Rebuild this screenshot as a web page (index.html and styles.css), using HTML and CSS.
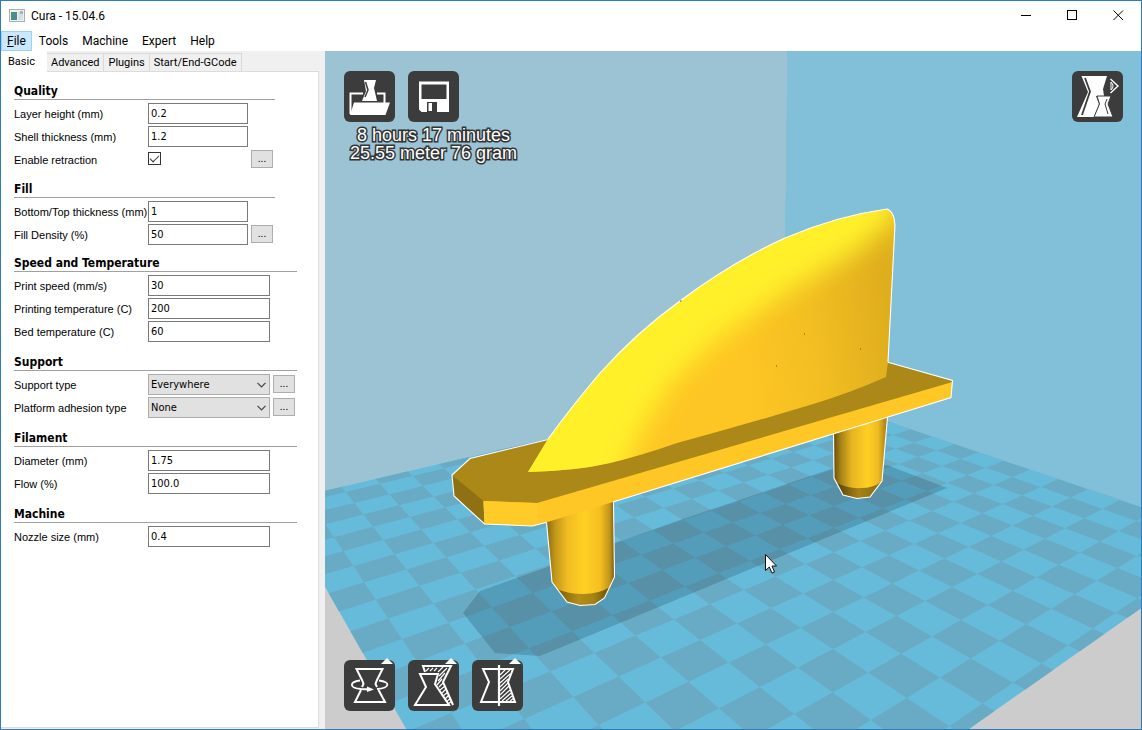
FILE: index.html
```html
<!DOCTYPE html>
<html lang="en">
<head>
<meta charset="utf-8">
<title>Cura - 15.04.6</title>
<link rel="stylesheet" href="styles.css">
</head>
<body>
<div class="window">
  <header class="titlebar">
    <svg class="app-icon" width="16" height="14" viewBox="0 0 16 14" aria-hidden="true">
      <rect x=".5" y=".5" width="15" height="12" fill="#eef1f2" stroke="#a9b0b4"/>
      <rect x="2" y="3" width="6" height="8" fill="#4a8f86"/>
      <rect x="9" y="3" width="5" height="8" fill="#d5dfe4"/>
      <rect x="11" y="2" width="3" height="3" fill="#9fb8a8"/>
    </svg>
    <h1 class="title">Cura - 15.04.6</h1>
    <div class="window-controls">
      <button class="window-button" type="button" aria-label="Minimize"><svg width="11" height="11" viewBox="0 0 11 11"><path d="M0 5.5H10" stroke="#000"/></svg></button>
      <button class="window-button" type="button" aria-label="Maximize"><svg width="11" height="11" viewBox="0 0 11 11"><rect x=".5" y=".5" width="9" height="9" fill="none" stroke="#000"/></svg></button>
      <button class="window-button" type="button" aria-label="Close"><svg width="11" height="11" viewBox="0 0 11 11"><path d="M.5 .5L10 10M10 .5L.5 10" stroke="#000"/></svg></button>
    </div>
  </header>
  <nav class="menubar">
    <button class="menu-item menu-item--active" type="button"><u>F</u>ile</button>
    <button class="menu-item" type="button">Tools</button>
    <button class="menu-item" type="button">Machine</button>
    <button class="menu-item" type="button">Expert</button>
    <button class="menu-item" type="button">Help</button>
  </nav>
  <main class="workspace">
    <aside class="sidebar">
      <div class="tabs" role="tablist">
        <button class="tab tab--active" type="button" role="tab" aria-selected="true">Basic</button>
        <button class="tab" type="button" role="tab">Advanced</button>
        <button class="tab" type="button" role="tab">Plugins</button>
        <button class="tab" type="button" role="tab">Start/End-GCode</button>
      </div>
      <form class="panel">
        <section class="section">
          <h2 class="section-title">Quality</h2>
          <div class="row"><label class="label" for="layer">Layer height (mm)</label><input class="field" id="layer" type="text" value="0.2"></div>
          <div class="row"><label class="label" for="shell">Shell thickness (mm)</label><input class="field" id="shell" type="text" value="1.2"></div>
          <div class="row"><label class="label" for="retract">Enable retraction</label><span class="check-cell"><input class="check" id="retract" type="checkbox" checked></span><button class="more" type="button" aria-label="Retraction settings">...</button></div>
        </section>
        <section class="section">
          <h2 class="section-title">Fill</h2>
          <div class="row"><label class="label" for="thick">Bottom/Top thickness (mm)</label><input class="field" id="thick" type="text" value="1"></div>
          <div class="row"><label class="label" for="density">Fill Density (%)</label><input class="field" id="density" type="text" value="50"><button class="more" type="button" aria-label="Fill settings">...</button></div>
        </section>
        <section class="section section--wide">
          <h2 class="section-title">Speed and Temperature</h2>
          <div class="row"><label class="label" for="speed">Print speed (mm/s)</label><input class="field" id="speed" type="text" value="30"></div>
          <div class="row"><label class="label" for="temp">Printing temperature (C)</label><input class="field" id="temp" type="text" value="200"></div>
          <div class="row"><label class="label" for="bed">Bed temperature (C)</label><input class="field" id="bed" type="text" value="60"></div>
        </section>
        <section class="section section--wide">
          <h2 class="section-title">Support</h2>
          <div class="row"><label class="label" for="support">Support type</label><span class="select-wrap"><select class="select" id="support"><option>Everywhere</option></select><svg class="chevron" width="9" height="6" viewBox="0 0 9 6"><path d="M.5 .8L4.5 4.8L8.5 .8" fill="none" stroke="#444" stroke-width="1.2"/></svg></span><button class="more" type="button" aria-label="Support settings">...</button></div>
          <div class="row"><label class="label" for="adhesion">Platform adhesion type</label><span class="select-wrap"><select class="select" id="adhesion"><option>None</option></select><svg class="chevron" width="9" height="6" viewBox="0 0 9 6"><path d="M.5 .8L4.5 4.8L8.5 .8" fill="none" stroke="#444" stroke-width="1.2"/></svg></span><button class="more" type="button" aria-label="Adhesion settings">...</button></div>
        </section>
        <section class="section section--wide">
          <h2 class="section-title">Filament</h2>
          <div class="row"><label class="label" for="diameter">Diameter (mm)</label><input class="field" id="diameter" type="text" value="1.75"></div>
          <div class="row"><label class="label" for="flow">Flow (%)</label><input class="field" id="flow" type="text" value="100.0"></div>
        </section>
        <section class="section section--wide">
          <h2 class="section-title">Machine</h2>
          <div class="row"><label class="label" for="nozzle">Nozzle size (mm)</label><input class="field" id="nozzle" type="text" value="0.4"></div>
        </section>
      </form>
    </aside>

    <section class="viewport" aria-label="3D view">
      <svg class="scene" viewBox="325 51 816 678" preserveAspectRatio="xMidYMid slice" aria-hidden="true">
        <defs>
          <linearGradient id="fin" gradientUnits="userSpaceOnUse" x1="740" y1="360" x2="892" y2="340">
            <stop offset="0" stop-color="#fec624"/><stop offset=".5" stop-color="#f2be22"/><stop offset="1" stop-color="#dfae1e"/>
          </linearGradient>
          <linearGradient id="legL" gradientUnits="userSpaceOnUse" x1="547" y1="0" x2="615" y2="0">
            <stop offset="0" stop-color="#8a6c10"/><stop offset=".12" stop-color="#c2971a"/><stop offset=".3" stop-color="#f1bc22"/><stop offset=".55" stop-color="#ffd024"/><stop offset=".78" stop-color="#f5bf22"/><stop offset=".92" stop-color="#c0951a"/><stop offset="1" stop-color="#6e560d"/>
          </linearGradient>
          <linearGradient id="legR" gradientUnits="userSpaceOnUse" x1="833" y1="0" x2="886" y2="0">
            <stop offset="0" stop-color="#5e490b"/><stop offset=".15" stop-color="#a88316"/><stop offset=".35" stop-color="#e6b420"/><stop offset=".65" stop-color="#ffcf24"/><stop offset=".85" stop-color="#eebb22"/><stop offset="1" stop-color="#a88316"/>
          </linearGradient>
          <linearGradient id="bevL" gradientUnits="userSpaceOnUse" x1="552" y1="0" x2="612" y2="0">
            <stop offset="0" stop-color="#6b530c"/><stop offset=".45" stop-color="#b58e18"/><stop offset=".7" stop-color="#a68215"/><stop offset="1" stop-color="#5a460a"/>
          </linearGradient>
          <linearGradient id="bevR" gradientUnits="userSpaceOnUse" x1="835" y1="0" x2="883" y2="0">
            <stop offset="0" stop-color="#4f3d09"/><stop offset=".5" stop-color="#a68215"/><stop offset="1" stop-color="#86690f"/>
          </linearGradient>
          <filter id="soft" x="-20%" y="-20%" width="140%" height="140%"><feGaussianBlur stdDeviation="13"/></filter>
          <clipPath id="floorClip"><path d="M276.7 502L779 384.6L1238.5 540L566.9 1010.8Z"/></clipPath>
          <clipPath id="finClip"><path d="M528 472L548 439Q572 406 600 373Q638 331 680 301Q732 262 785 238Q836 216 887 209Q892 211 894 218L895 225L888 362L886 377Q850 393 810 405Q740 426 677 443Q643 455 610 463Q575 471 528 472Z"/></clipPath>
        </defs>
        <rect x="325" y="51" width="816" height="678" fill="#cccccc"/>
        <path d="M276 51H787L783 386L276 503Z" fill="#9bc3d4"/>
        <path d="M787 51H1260V548L783 386Z" fill="#82bfd8"/>
        <path d="M276.7 502L779 384.6L1238.5 540L566.9 1010.8Z" fill="#66bbdb"/>
        <path id="checker" fill="#69abc4" clip-path="url(#floorClip)"/>
        <path d="M463 613L480 591L680 520L834 468L887 465L947 488L540 656L495 653Z" fill="#102838" fill-opacity=".2"/>

        <path d="M546 515L552 582L558 590L567 602L580 605.5L595 604.5L604.5 598L610 588L614.5 577L613.5 495Z" fill="url(#legL)"/>
        <path d="M557 589Q568 594 583 594Q599 594 610 587L604.5 598L595 604.5L580 605.5L567 602Z" fill="url(#bevL)"/>
        <path d="M833.5 425L834 478L843 495L857 498.5L870 497L882 481L888 410Z" fill="url(#legR)"/>
        <path d="M837 483Q849 489 861 488Q873 488 881 482L870 497L857 498.5L843 495Z" fill="url(#bevR)"/>
        <path d="M546.5 522L552 582L567 602L580 605.5L595 604.5L604.5 598L614.5 577L613.5 502M833.5 433L834 478L843 495L857 498.5L870 497L882 481L887.5 417" fill="none" stroke="#fff" stroke-width="1.1"/>

        <path d="M452 475L470 458.5L548 439.5L887 362L952.5 380.5L951 386L537 507L483.5 503Z" fill="#ab8817"/>
        <path d="M452 475L483.500 501L484.500 524L454 496Z" fill="#8f7113"/>
        <path d="M483.500 501L537 503L952.5 382L951 397.500L888 417L613 502L546 522.500L532 526L484.500 524Z" fill="#fec726"/>
        <path d="M483.500 501L537 503V525L532 526L484.500 524Z" fill="#ffcb28"/>
        <path d="M548 439.500L470 458.500L452 475L454 496L484.500 524L532 526L546 522.500M613 502L888 417L951 397.500L952.500 380.500L887 362" fill="none" stroke="#fff" stroke-width="1.1"/>

        <g clip-path="url(#finClip)">
          <rect x="520" y="200" width="380" height="280" fill="url(#fin)"/>
          <path d="M480 520L490 440L560 370L660 280L780 210L900 180L897 219L855 252L790 290L722 335L674 380L642 430L612 500Z" fill="#fff02b" filter="url(#soft)"/>
        </g>
        <path d="M548 439Q572 406 600 373Q638 331 680 301Q732 262 785 238Q836 216 887 209Q892 211 894 218L895 225L888 362" fill="none" stroke="#fff" stroke-width="1.1"/>
        <path d="M680 301h1.500M804 334h1M776 366h1M860 349h1" stroke="#6b530c"/>
        <path d="M765.500 554.500V570.500L769.300 567L772 573L774.500 572L772 566H776.500Z" fill="#fff" stroke="#111"/>
      </svg>

      <div class="overlay">
        <div class="overlay-row">
          <div class="job">
            <div class="tools">
              <button class="tool" type="button" aria-label="Load model"><svg viewBox="0 0 51 51">
                <path d="M20 9H32L30 17L33 30H18L22 20Z" fill="#fff"/><path d="M21.500 11L24 19L21 26" fill="none" stroke="#3c3c3c" stroke-width="1.500"/>
                <path d="M19 22.500H6.500V43M33 22.500H40.500V32" fill="none" stroke="#fff" stroke-width="2"/><path d="M10 31.500H46L41.500 44H6Z" fill="#fff"/></svg></button>
              <button class="tool" type="button" aria-label="Save toolpath"><svg viewBox="0 0 51 51">
                <path fill-rule="evenodd" d="M11 10.500H41V41H11ZM13.500 13.500V28H38.500V13.500ZM19 31V41H29V31Z" fill="#fff"/><path d="M20.500 32H24V40H20.500Z" fill="#fff"/><path d="M10.500 38V41.500H14Z" fill="#3c3c3c"/></svg></button>
            </div>
            <p class="stats">8 hours 17 minutes<br>25.55 meter 76 gram</p>
          </div>
          <button class="tool" type="button" aria-label="View mode"><svg viewBox="0 0 51 51">
            <path d="M9.500 5H35L31 18L32 25H24L27 33L22 46H5L16 21Z" fill="#fff"/><path d="M13 7L18 20.500L10 44" fill="none" stroke="#3c3c3c" stroke-width="1.800"/>
            <path d="M25 25H39L36 33L41 46H22L27.500 33Z" fill="#fff" stroke="#3c3c3c"/><path d="M35 28L33 33L36 43" fill="none" stroke="#3c3c3c"/>
            <path d="M38.500 8L46 15L38.500 22" fill="none" stroke="#fff" stroke-width="1.400"/><path d="M39 11Q43 15 39 19Z" fill="none" stroke="#fff"/></svg></button>
        </div>
        <div class="tools">
          <button class="tool" type="button" aria-label="Rotate"><svg viewBox="0 0 51 51">
            <path d="M37 4L43 -2L49 4Z" fill="#fff"/>
            <path d="M18.500 21L12.500 9H38.500L32.500 21M17 30L11 42H41L34.500 30M18.500 21L19.500 24L18 27M32.500 21L31.500 24L33 27" fill="none" stroke="#fff" stroke-width="2"/>
            <path d="M16 20.500C5 22 5 28 17 29L26 29.500M35 20.500C47 22 46 28 33 29" fill="none" stroke="#fff" stroke-width="1.800"/><path d="M23 26.500L30 29.500L23 32Z" fill="#fff"/></svg></button>
          <button class="tool" type="button" aria-label="Scale"><svg viewBox="0 0 51 51">
            <path d="M37 4L43 -2L49 4Z" fill="#fff"/>
            <path d="M17 12L15 6H43L35 22L45 45" fill="none" stroke="#fff" stroke-width="2"/>
            <path d="M18 11L21 8M22 11L25 8M26 11L29 8M30 12L35 7M31 16L39 8M30 21L37 13M29 25L34 19M31 27L35 23M32 30L37 26M34 33L38 29M35 36L40 32M37 39L41 35M38 42L43 38M40 44L44 41" stroke="#fff" stroke-width="1.200"/>
            <path d="M12 14H30L27 24L41 45H7L18 27Z" fill="#3c3c3c" stroke="#fff" stroke-width="2"/></svg></button>
          <button class="tool" type="button" aria-label="Mirror"><svg viewBox="0 0 51 51">
            <path d="M37 4L43 -2L49 4Z" fill="#fff"/>
            <path d="M11 9H41L36 22L43 42H9L17 22Z" fill="none" stroke="#fff" stroke-width="2"/><path d="M27 5V46" stroke="#fff" stroke-width="2.200"/>
            <path d="M28 15L34 9M28 19L38 10M28 23L38 14M28 27L36 19M28 31L36 23M28 35L37 26M28 39L38 30M30 41L39 33M34 41L40 36M38 41L42 38" stroke="#fff" stroke-width="1.200"/></svg></button>
        </div>
      </div>
    </section>
  </main>
</div>
<script src="scene.js"></script>
</body>
</html>
```

FILE: styles.css
```css
* { box-sizing: border-box; }
body {
  margin: 0;
  color: #000;
  font-family: Roboto, "DejaVu Sans Condensed", sans-serif;
  font-size: 11px;
}
button { font: inherit; color: inherit; padding: 0; margin: 0; }

.window {
  display: flex;
  flex-direction: column;
  height: 100vh;
  border: 1px solid #2b7cc0;
  background: #fff;
}

.titlebar {
  display: flex;
  align-items: center;
  height: 29px;
  flex: none;
  padding-left: 8px;
  gap: 6px;
}
.title {
  flex: 1;
  margin: 0;
  font-size: 12px;
  font-weight: 400;
}
.window-controls { display: flex; align-self: stretch; }
.window-button {
  display: grid;
  place-items: center;
  width: 46px;
  border: 0;
  background: none;
}

.menubar {
  display: flex;
  flex: none;
  height: 21px;
  padding-top: 1px;
  font-size: 12px;
}
.menu-item {
  padding: 0 6px;
  border: 1px solid transparent;
  background: none;
  line-height: 18px;
}
.menu-item--active { padding: 0 5px; background: #cce8ff; border-color: #99d1ff; }

.workspace { display: flex; flex: 1; min-height: 0; }
.sidebar {
  display: flex;
  flex-direction: column;
  flex: none;
  width: 324px;
  padding: 0 6px 1px 0;
  background: #f0f0f0;
}
.tabs { display: flex; align-items: flex-end; height: 20px; flex: none; }
.tab {
  height: 18px;
  padding: 0 4px;
  border: 1px solid #d9d9d9;
  border-width: 1px 1px 0 0;
  background: #f0f0f0;
}
.tab--active {
  height: 21px;
  margin-bottom: -1px;
  padding: 0 11px 2px 7px;
  background: #fff;
  border-color: #fff;
  z-index: 1;
}
.panel {
  flex: 1;
  min-height: 0;
  padding: 8px 13px;
  border: 1px solid #dcdcdc;
  border-left: 0;
  background: #fff;
}

.section { width: 261px; }
.section + .section { margin-top: 8px; }
.section--wide { width: 283px; }
.section + .section--wide { margin-top: 7px; }
.section--wide + .section--wide { margin-top: 9px; }
.section-title {
  height: 20px;
  margin: 0 0 3px;
  border-bottom: 1px solid #a0a0a0;
  font: bold 12px/22px "DejaVu Sans Condensed", "DejaVu Sans", sans-serif;
}
.row { display: flex; align-items: center; height: 21px; }
.row + .row { margin-top: 2px; }
.label {
  width: 134px;
  flex: none;
  padding-top: 2px;
  font-family: "Liberation Sans", sans-serif;
  line-height: 19px;
  white-space: nowrap;
}
.field, .select-wrap, .check-cell { width: 100px; height: 21px; }
.section--wide .field, .section--wide .select-wrap { width: 122px; }
.field {
  padding: 0 2px 1px;
  border: 1px solid #7a7a7a;
  background: #fff;
  color: #000;
  font: 11px "DejaVu Sans Condensed", "DejaVu Sans", sans-serif;
}
.select-wrap { position: relative; }
.select {
  width: 100%;
  height: 100%;
  padding: 0 2px;
  appearance: none;
  border: 1px solid #adadad;
  border-radius: 0;
  background: #e1e1e1;
  color: #000;
  font: 11px "DejaVu Sans Condensed", "DejaVu Sans", sans-serif;
}
.chevron { position: absolute; right: 4px; top: 8px; pointer-events: none; }
.check-cell { display: flex; align-items: center; padding-bottom: 2px; }
.check {
  appearance: none;
  width: 13px;
  height: 13px;
  margin: 0;
  border: 1px solid #333;
  display: grid;
  place-items: center;
}
.check:checked::before {
  content: "";
  width: 8px;
  height: 4px;
  margin-bottom: 3px;
  border: solid #333;
  border-width: 0 0 1px 1px;
  transform: rotate(-45deg);
}
.more {
  width: 22px;
  height: 18px;
  margin: 0 0 1px 3px;
  border: 1px solid #adadad;
  background: #e1e1e1;
  line-height: 14px;
}

.viewport { position: relative; flex: 1; min-width: 0; overflow: hidden; background: #ccc; }
.scene { display: block; width: 100%; height: 100%; }
.overlay {
  position: absolute;
  inset: 0;
  display: flex;
  flex-direction: column;
  justify-content: space-between;
  padding: 20px 18px 18px 19px;
}
.overlay-row { display: flex; justify-content: space-between; align-items: flex-start; }
.tools { display: flex; gap: 13px; }
.tool {
  width: 51px;
  height: 51px;
  border: 0;
  border-radius: 6px;
  background: #3c3c3c;
}
.tool svg { display: block; width: 51px; height: 51px; overflow: visible; }
.stats {
  margin: 4px 0 0;
  padding-left: 6px;
  color: #fff;
  font: 18px/18px "Liberation Sans", sans-serif;
  text-align: center;
  -webkit-text-stroke: 3px #333;
  paint-order: stroke fill;
}
```

FILE: scene.js
```js
// Projects the build plate's checkerboard into the view.
// u and v run from 0 to 1 along the two sides of the plate.
function project(u, v) {
  const w = 1 - 0.5884 * u + 0.4915 * v;
  return [
    ((276.7 - 43.4 * u + 885.2 * v) / w).toFixed(1),
    ((502 - 86 * u + 71.6 * v) / w).toFixed(1)
  ].join(" ");
}

function vertex(i, j) {
  return project(0.826 + 0.0533 * i, 0.343 + 0.0505 * j);
}

let d = "";
for (let i = -16; i <= 3; i++) {
  for (let j = -7; j <= 13; j++) {
    if ((i + j) % 2 !== 0) continue;
    d += `M${vertex(i, j)}L${vertex(i + 1, j)}L${vertex(i + 1, j + 1)}L${vertex(i, j + 1)}Z`;
  }
}
document.getElementById("checker").setAttribute("d", d);
```
